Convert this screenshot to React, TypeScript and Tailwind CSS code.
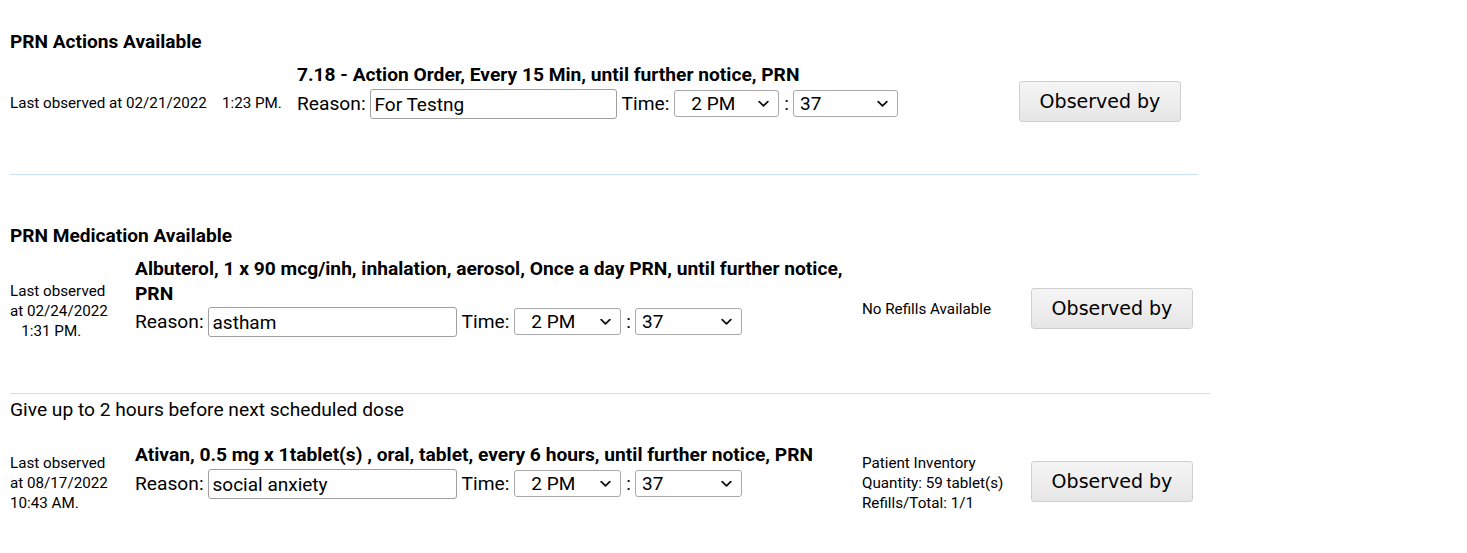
import React from "react";

const roboto = { fontFamily: "Roboto, 'Liberation Sans', sans-serif" };

function Chevron() {
  return (
    <svg
      className="pointer-events-none absolute right-[10px] top-1/2 -translate-y-1/2"
      width="11"
      height="7"
      viewBox="0 0 11 7"
      fill="none"
    >
      <path d="M1.2 1.2 L5.5 5.4 L9.8 1.2" stroke="#111" strokeWidth="1.8" strokeLinecap="round" strokeLinejoin="round" />
    </svg>
  );
}

function Sel({ value, w, pl }: { value: string; w: string; pl: string }) {
  return (
    <div className={`relative ${w}`}>
      <select
        defaultValue={value}
        className={`h-[27px] w-full appearance-none rounded-[3px] border border-[#a9a9a9] bg-white ${pl} text-[19px] leading-[25px] text-black outline-none`}
        style={roboto}
      >
        <option value={value}>{value}</option>
      </select>
      <Chevron />
    </div>
  );
}

function ReasonRow({
  reason,
  inputW,
  selW,
}: {
  reason: string;
  inputW: string;
  selW: string;
}) {
  return (
    <div className="flex items-center text-[19.2px] text-black" style={roboto}>
      <span className="leading-[24px]">Reason:</span>
      <input
        defaultValue={reason}
        className={`ml-[4px] h-[30px] ${inputW} rounded-[3px] border border-[#a0a0a0] bg-white px-[4px] text-[19px] text-black outline-none`}
        style={roboto}
      />
      <span className="ml-[5px] leading-[24px]">Time:</span>
      <div className="ml-[5px]">
        <Sel value="2 PM" w={selW} pl="pl-[16px]" />
      </div>
      <span className="ml-[5px] mr-[4px] leading-[24px]">:</span>
      <Sel value="37" w={selW} pl="pl-[6px]" />
    </div>
  );
}

function ObsButton() {
  return (
    <button
      className="h-[41px] w-[162px] rounded-[3px] border border-[#cfcfcf] bg-gradient-to-b from-[#f5f5f5] to-[#e6e6e6] text-[19px] text-black"
      style={{ fontFamily: "'DejaVu Sans', Verdana, sans-serif" }}
    >
      Observed by
    </button>
  );
}

export default function App() {
  return (
    <div className="min-h-[553px] w-[1467px] bg-white pl-[10px] text-black" style={roboto}>
      {/* Section 1 */}
      <div className="pt-[32px] text-[19.1px] font-bold leading-[20px]">PRN Actions Available</div>

      <div className="mt-[10px] flex h-[60px]">
        <div className="w-[287px] pt-[31px] text-[15.2px] leading-[20px] whitespace-pre">
          Last observed at 02/21/2022{"\u00a0\u00a0\u00a0 "}1:23 PM.
        </div>
        <div className="w-[722px]">
          <div className="text-[19.2px] font-bold leading-[25px]">
            7.18 - Action Order, Every 15 Min, until further notice, PRN
          </div>
          <div className="mt-[2px]">
            <ReasonRow reason="For Testng" inputW="w-[247px]" selW="w-[105px]" />
          </div>
        </div>
        <div className="pt-[19px]">
          <ObsButton />
        </div>
      </div>

      <div className="mt-[52px] h-px w-[1188px] bg-[#c7e1fb]" />

      {/* Section 2 */}
      <div className="mt-[51px] text-[19.1px] font-bold leading-[20px]">PRN Medication Available</div>

      <div className="mt-[10px] flex h-[85px]">
        <div className="w-[125px] pt-[25px] text-[15.2px] leading-[20px] whitespace-pre">
          <div>Last observed</div>
          <div>at 02/24/2022</div>
          <div>{"\u00a0\u00a0\u00a0"}1:31 PM.</div>
        </div>
        <div className="w-[727px]">
          <div className="w-[720px] text-[19.2px] font-bold leading-[25px]">
            Albuterol, 1 x 90 mcg/inh, inhalation, aerosol, Once a day PRN, until further notice, PRN
          </div>
          <div className="mt-[1px]">
            <ReasonRow reason="astham" inputW="w-[249px]" selW="w-[107px]" />
          </div>
        </div>
        <div className="w-[169px] pt-[43px] text-[15.2px] leading-[20px]">No Refills Available</div>
        <div className="pt-[32px]">
          <ObsButton />
        </div>
      </div>

      <div className="mt-[52px] h-px w-[1200px] bg-[#d3dbe9]" />

      {/* Section 3 */}
      <div className="mt-[6px] text-[19.2px] leading-[20px]">Give up to 2 hours before next scheduled dose</div>

      <div className="mt-[22px] flex">
        <div className="w-[125px] pt-[11px] text-[15.2px] leading-[20px]">
          <div>Last observed</div>
          <div>at 08/17/2022</div>
          <div>10:43 AM.</div>
        </div>
        <div className="w-[727px]">
          <div className="text-[19.2px] font-bold leading-[25px]">
            Ativan, 0.5 mg x 1tablet(s) , oral, tablet, every 6 hours, until further notice, PRN
          </div>
          <div className="mt-[2px]">
            <ReasonRow reason="social anxiety" inputW="w-[249px]" selW="w-[107px]" />
          </div>
        </div>
        <div className="w-[169px] pt-[11px] text-[15.2px] leading-[20px]">
          <div>Patient Inventory</div>
          <div>Quantity: 59 tablet(s)</div>
          <div>Refills/Total: 1/1</div>
        </div>
        <div className="pt-[19px]">
          <ObsButton />
        </div>
      </div>
    </div>
  );
}
